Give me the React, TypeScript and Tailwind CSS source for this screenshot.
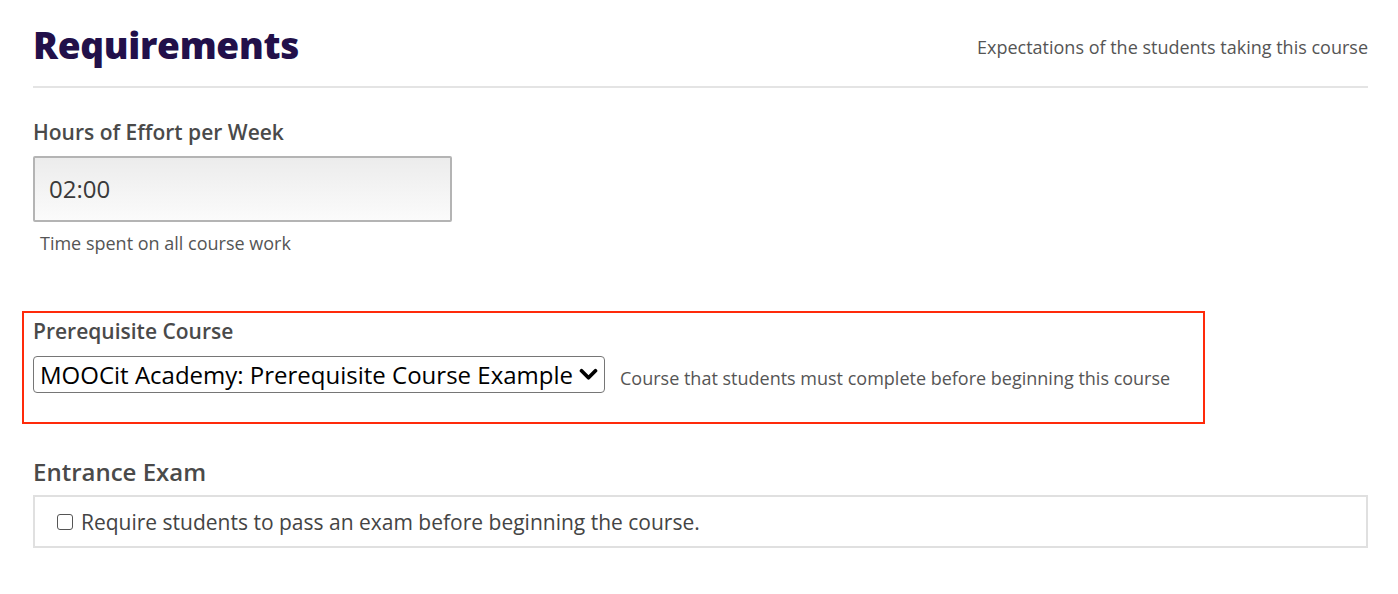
export default function App() {
  return (
    <div className="min-h-screen bg-white font-['Open_Sans',sans-serif] text-[#4a4a4a]">
      <div className="pl-[33px] pr-[30px] pt-[22px]">
        {/* Header */}
        <div className="flex items-start justify-between border-b-2 border-[#e4e4e4] pb-[18px]">
          <h2 className="text-[37px] font-extrabold leading-[46px] tracking-[-0.3px] text-[#22104a]">Requirements</h2>
          <p className="mt-[13px] text-[18px] leading-[24px] text-[#555]">Expectations of the students taking this course</p>
        </div>

        {/* Hours of effort */}
        <div className="mt-[30px]">
          <label className="block text-[21px] font-semibold leading-[28px] text-[#4a4a4a]">Hours of Effort per Week</label>
          <div className="mt-[10px] flex h-[66px] w-[419px] items-center rounded-[2px] border-2 border-[#b4b4b4] bg-gradient-to-b from-[#ececec] to-[#fbfbfb] px-[14px] text-[24px] text-[#3a3a3a]">
            02:00
          </div>
          <p className="mt-[9px] pl-[7px] text-[18px] leading-[24px] text-[#555]">Time spent on all course work</p>
        </div>
      </div>

      {/* Prerequisite (highlighted) */}
      <div className="ml-[22px] mt-[56px] w-[1183px] border-2 border-[#ff2a0a] pb-[29px] pl-[9px] pt-[4px]">
        <label className="block text-[21px] font-semibold leading-[28px] text-[#4a4a4a]">Prerequisite Course</label>
        <div className="mt-[11px] flex items-center">
          <div className="flex h-[37px] w-[572px] items-center justify-between rounded-[4px] border border-[#767676] pl-[6px] pr-[6px] text-[24px] leading-[30px] text-black">
            <span>MOOCit Academy: Prerequisite Course Example</span>
            <svg viewBox="0 0 20 14" className="h-[13px] w-[19px]" fill="none" stroke="black" strokeWidth={4} strokeLinecap="round" strokeLinejoin="round">
              <path d="M2.5 3 L10 10.5 L17.5 3" />
            </svg>
          </div>
          <p className="ml-[15px] mt-[6px] text-[18px] leading-[24px] text-[#555]">Course that students must complete before beginning this course</p>
        </div>
      </div>

      {/* Entrance exam */}
      <div className="pl-[33px] pr-[30px] pt-[33px]">
        <h3 className="text-[24px] font-[550] leading-[30px] text-[#4a4a4a]">Entrance Exam</h3>
        <div className="mt-[8px] flex h-[53px] items-center border-2 border-[#e0e0e0] pl-[22px]">
          <span className="mr-[8px] inline-block h-[16px] w-[16px] rounded-[3px] border border-[#555] bg-white" />
          <span className="text-[21px] leading-[28px] text-[#444]">Require students to pass an exam before beginning the course.</span>
        </div>
      </div>
    </div>
  )
}
